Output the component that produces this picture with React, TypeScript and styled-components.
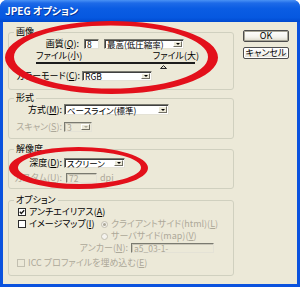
import React from "react";
import styled, { createGlobalStyle } from "styled-components";

const GlobalStyle = createGlobalStyle`
  html, body { margin: 0; padding: 0; background: #ffffff; }
  #root { width: 300px; height: 287px; }
`;

const FONT = `"Noto Sans CJK JP", "Noto Sans", sans-serif`;
const DISABLED = "#aca899";

const Window = styled.div`
  position: relative;
  width: 300px;
  height: 287px;
  display: flex;
  flex-direction: column;
  background: #0a52de;
  border-radius: 7px 7px 0 0;
  overflow: hidden;
  font-family: ${FONT};
  font-size: 9px;
  line-height: 10px;
  font-feature-settings: "palt" 1;
  color: #000;
`;

const TitleBar = styled.div`
  flex: none;
  height: 22px;
  box-sizing: border-box;
  display: flex;
  align-items: center;
  padding: 0 0 1px 5px;
  background: linear-gradient(180deg, #4a92f5 0%, #1d6ae8 14%, #0a5ce3 40%, #0658e0 80%, #0049cf 100%);
  color: #fff;
  font-weight: bold;
  font-size: 10px;
  text-shadow: 1px 1px 0 rgba(0, 0, 60, 0.45);
`;

const Client = styled.div`
  flex: 1;
  margin: 0 3px 3px;
  background: #ece9d8;
  display: flex;
  gap: 9px;
  padding: 5px 0 0 5px;
`;

const Groups = styled.div`
  width: 226px;
  flex: none;
  display: flex;
  flex-direction: column;
`;

const Buttons = styled.div`
  width: 46px;
  flex: none;
  display: flex;
  flex-direction: column;
  gap: 5px;
  padding-top: 3px;
`;

const Button = styled.button<{ $default?: boolean }>`
  width: 46px;
  height: 12px;
  padding: 0;
  box-sizing: border-box;
  font: inherit;
  font-size: 9px;
  line-height: 10px;
  color: #000;
  border: 1px solid #4d4d4d;
  border-radius: 2px;
  background: linear-gradient(180deg, #ffffff 0%, #f4f3ee 60%, #dcd9cb 100%);
  box-shadow: ${(p) => (p.$default ? "inset 0 0 0 1px #a8a698" : "inset 0 0 0 1px #ffffff")};
`;

const Group = styled.fieldset<{ $pb: number; $gap: number }>`
  margin: ${(p) => p.$gap}px 0 0 0;
  padding: 0 0 ${(p) => p.$pb}px 0;
  border: 1px solid #d0d0bf;
  border-radius: 3px;
  min-width: 0;
`;

const Legend = styled.legend`
  margin-left: 5px;
  padding: 0 2px;
  font-size: 9px;
  line-height: 10px;
  color: #000;
`;

const Row = styled.div<{ $mt: number; $h: number; $ml?: number }>`
  display: flex;
  align-items: center;
  height: ${(p) => p.$h}px;
  margin-top: ${(p) => p.$mt}px;
  margin-left: ${(p) => p.$ml ?? 0}px;
  white-space: nowrap;
`;

const Label = styled.span<{ $w: number; $gap: number; $disabled?: boolean }>`
  flex: none;
  width: ${(p) => p.$w}px;
  margin-right: ${(p) => p.$gap}px;
  text-align: right;
  color: ${(p) => (p.$disabled ? DISABLED : "#000")};
`;

const Field = styled.div<{ $w: number; $h: number; $disabled?: boolean }>`
  flex: none;
  width: ${(p) => p.$w}px;
  height: ${(p) => p.$h}px;
  box-sizing: border-box;
  display: flex;
  align-items: center;
  padding-left: 2px;
  background: ${(p) => (p.$disabled ? "#ece9d8" : "#ffffff")};
  border: 1px solid;
  border-color: #7a7a70 #e4e2d6 #e4e2d6 #7a7a70;
  box-shadow: inset 1px 1px 0 ${(p) => (p.$disabled ? "#c9c6b8" : "#404040")};
  color: ${(p) => (p.$disabled ? DISABLED : "#000")};
`;

const FieldText = styled.span`
  flex: 1;
  min-width: 0;
  font-size: 8.5px;
  line-height: 8px;
  white-space: nowrap;
`;

const DropBtn = styled.span<{ $disabled?: boolean }>`
  flex: none;
  width: 9px;
  height: calc(100% - 2px);
  margin-right: 1px;
  box-sizing: border-box;
  background: #ece9d8;
  border: 1px solid;
  border-color: #ffffff #716f64 #716f64 #ffffff;
  display: flex;
  align-items: center;
  justify-content: center;
  &::after {
    content: "";
    border-left: 2px solid transparent;
    border-right: 2px solid transparent;
    border-top: 2px solid ${(p) => (p.$disabled ? DISABLED : "#000")};
  }
`;

const Scale = styled.div`
  display: flex;
  justify-content: space-between;
  width: 163px;
  height: 10px;
  margin: 2px 0 0 27px;
`;

const Slider = styled.div`
  position: relative;
  width: 159px;
  height: 7px;
  margin-left: 27px;
  &::before {
    content: "";
    display: block;
    margin-top: 1px;
    height: 2px;
    background: #1c1c1c;
  }
`;

const Thumb = styled.svg`
  position: absolute;
  top: 3px;
  width: 7px;
  height: 4px;
  margin-left: -3px;
`;

const Unit = styled.span<{ $disabled?: boolean }>`
  margin-left: 3px;
  color: ${(p) => (p.$disabled ? DISABLED : "#000")};
`;

const Box = styled.span<{ $disabled?: boolean }>`
  flex: none;
  width: 8px;
  height: 8px;
  box-sizing: border-box;
  margin-right: 3px;
  border: 1px solid ${(p) => (p.$disabled ? "#c2bfb0" : "#2b2b2b")};
  background: ${(p) => (p.$disabled ? "#ece9d8" : "#ffffff")};
  display: flex;
  align-items: center;
  justify-content: center;
`;

const Radio = styled.span<{ $checked?: boolean }>`
  flex: none;
  width: 7px;
  height: 7px;
  box-sizing: border-box;
  margin-right: 3px;
  border-radius: 50%;
  border: 1px solid #c2bfb0;
  background: #f4f3ee;
  display: flex;
  align-items: center;
  justify-content: center;
  &::after {
    content: "";
    width: 3px;
    height: 3px;
    border-radius: 50%;
    background: ${(p) => (p.$checked ? DISABLED : "transparent")};
  }
`;

const Text = styled.span<{ $disabled?: boolean }>`
  color: ${(p) => (p.$disabled ? DISABLED : "#000")};
`;

const MapArea = styled.div`
  display: flex;
`;

const MapLeft = styled.div`
  width: 92px;
  flex: none;
`;

const RadioCol = styled.div`
  display: flex;
  flex-direction: column;
`;

const Overlay = styled.svg`
  position: absolute;
  left: 0;
  top: 0;
  width: 300px;
  height: 287px;
  pointer-events: none;
`;

const ellipse = (cx: number, cy: number, rx: number, ry: number) =>
  `M ${cx - rx} ${cy} a ${rx} ${ry} 0 1 0 ${2 * rx} 0 a ${rx} ${ry} 0 1 0 ${-2 * rx} 0 Z`;

type E = [number, number, number, number];
const Ring = ({ o, i }: { o: E; i: E }) => (
  <path d={`${ellipse(...o)} ${ellipse(...i)}`} fill="#e3101b" fillRule="evenodd" />
);

const U = styled.span`
  text-decoration: underline;
  text-decoration-thickness: 1px;
  text-underline-offset: 1px;
`;

const Check = () => (
  <svg width="6" height="6" viewBox="0 0 6 6">
    <polyline points="0.8,2.8 2.3,4.4 5.2,1.2" fill="none" stroke="#1a1a1a" strokeWidth="1.4" />
  </svg>
);

const SLIDER_W = 159;
const quality = 8;
const qualityMax = 10;

export default function App() {
  return (
    <>
      <GlobalStyle />
      <Window>
        <TitleBar>JPEG オプション</TitleBar>
        <Client>
          <Groups>
            <Group $gap={0} $pb={8}>
              <Legend>画像</Legend>
              <Row $mt={2} $h={10}>
                <Label $w={70} $gap={5}>
                  画質(<U>Q</U>):
                </Label>
                <Field $w={15} $h={10}>
                  <FieldText>8</FieldText>
                </Field>
                <Field $w={80} $h={10} style={{ marginLeft: 5 }}>
                  <FieldText>最高(低圧縮率)</FieldText>
                  <DropBtn />
                </Field>
              </Row>
              <Scale>
                <span>ファイル(小)</span>
                <span>ファイル(大)</span>
              </Scale>
              <Slider>
                <Thumb viewBox="0 0 7 4" style={{ left: (quality / qualityMax) * SLIDER_W }}>
                  <polygon points="3.5,0.5 6.5,3.5 0.5,3.5" fill="#d8d5c6" stroke="#222" strokeWidth="1" />
                </Thumb>
              </Slider>
              <Row $mt={2} $h={10}>
                <Label $w={71} $gap={2}>
                  カラーモード(<U>C</U>):
                </Label>
                <Field $w={70} $h={10}>
                  <FieldText>RGB</FieldText>
                  <DropBtn />
                </Field>
              </Row>
            </Group>

            <Group $gap={3} $pb={6}>
              <Legend>形式</Legend>
              <Row $mt={1} $h={11}>
                <Label $w={53} $gap={2}>
                  方式(<U>M</U>):
                </Label>
                <Field $w={105} $h={11}>
                  <FieldText>ベースライン(標準)</FieldText>
                  <DropBtn />
                </Field>
              </Row>
              <Row $mt={7} $h={10}>
                <Label $w={53} $gap={2} $disabled>
                  スキャン(<U>S</U>):
                </Label>
                <Field $w={28} $h={10} $disabled>
                  <FieldText>3</FieldText>
                  <DropBtn $disabled />
                </Field>
              </Row>
            </Group>

            <Group $gap={5} $pb={5}>
              <Legend>解像度</Legend>
              <Row $mt={4} $h={10}>
                <Label $w={53} $gap={2}>
                  深度(<U>D</U>):
                </Label>
                <Field $w={61} $h={10}>
                  <FieldText>スクリーン</FieldText>
                  <DropBtn />
                </Field>
              </Row>
              <Row $mt={5} $h={10}>
                <Label $w={53} $gap={4} $disabled>
                  カスタム(<U>U</U>):
                </Label>
                <Field $w={31} $h={10} $disabled>
                  <FieldText>72</FieldText>
                </Field>
                <Unit $disabled>dpi</Unit>
              </Row>
            </Group>

            <Group $gap={6} $pb={6}>
              <Legend>オプション</Legend>
              <Row $mt={1} $h={12} $ml={9}>
                <Box>
                  <Check />
                </Box>
                <Text>
                  アンチエイリアス(<U>A</U>)
                </Text>
              </Row>
              <MapArea>
                <MapLeft>
                  <Row $mt={0} $h={12} $ml={9}>
                    <Box />
                    <Text>
                      イメージマップ(<U>I</U>)
                    </Text>
                  </Row>
                </MapLeft>
                <RadioCol>
                  <Row $mt={0} $h={12}>
                    <Radio $checked />
                    <Text $disabled>
                      クライアントサイド(html)(<U>L</U>)
                    </Text>
                  </Row>
                  <Row $mt={0} $h={12}>
                    <Radio />
                    <Text $disabled>
                      サーバサイド(map)(<U>V</U>)
                    </Text>
                  </Row>
                </RadioCol>
              </MapArea>
              <Row $mt={0} $h={12}>
                <Label $w={119} $gap={3} $disabled>
                  アンカー(<U>N</U>):
                </Label>
                <Field $w={83} $h={10} $disabled>
                  <FieldText>a5_03-1-</FieldText>
                </Field>
              </Row>
              <Row $mt={3} $h={12} $ml={8}>
                <Box $disabled />
                <Text $disabled>
                  ICC プロファイルを埋め込む(<U>E</U>)
                </Text>
              </Row>
            </Group>
          </Groups>
          <Buttons>
            <Button $default>OK</Button>
            <Button>キャンセル</Button>
          </Buttons>
        </Client>
        <Overlay viewBox="0 0 300 287">
          <Ring o={[111.5, 57.5, 106.5, 36.5]} i={[111, 57, 97, 31.5]} />
          <Ring o={[78.5, 168, 69.5, 21]} i={[79.5, 167.5, 61.5, 16.5]} />
        </Overlay>
      </Window>
    </>
  );
}
